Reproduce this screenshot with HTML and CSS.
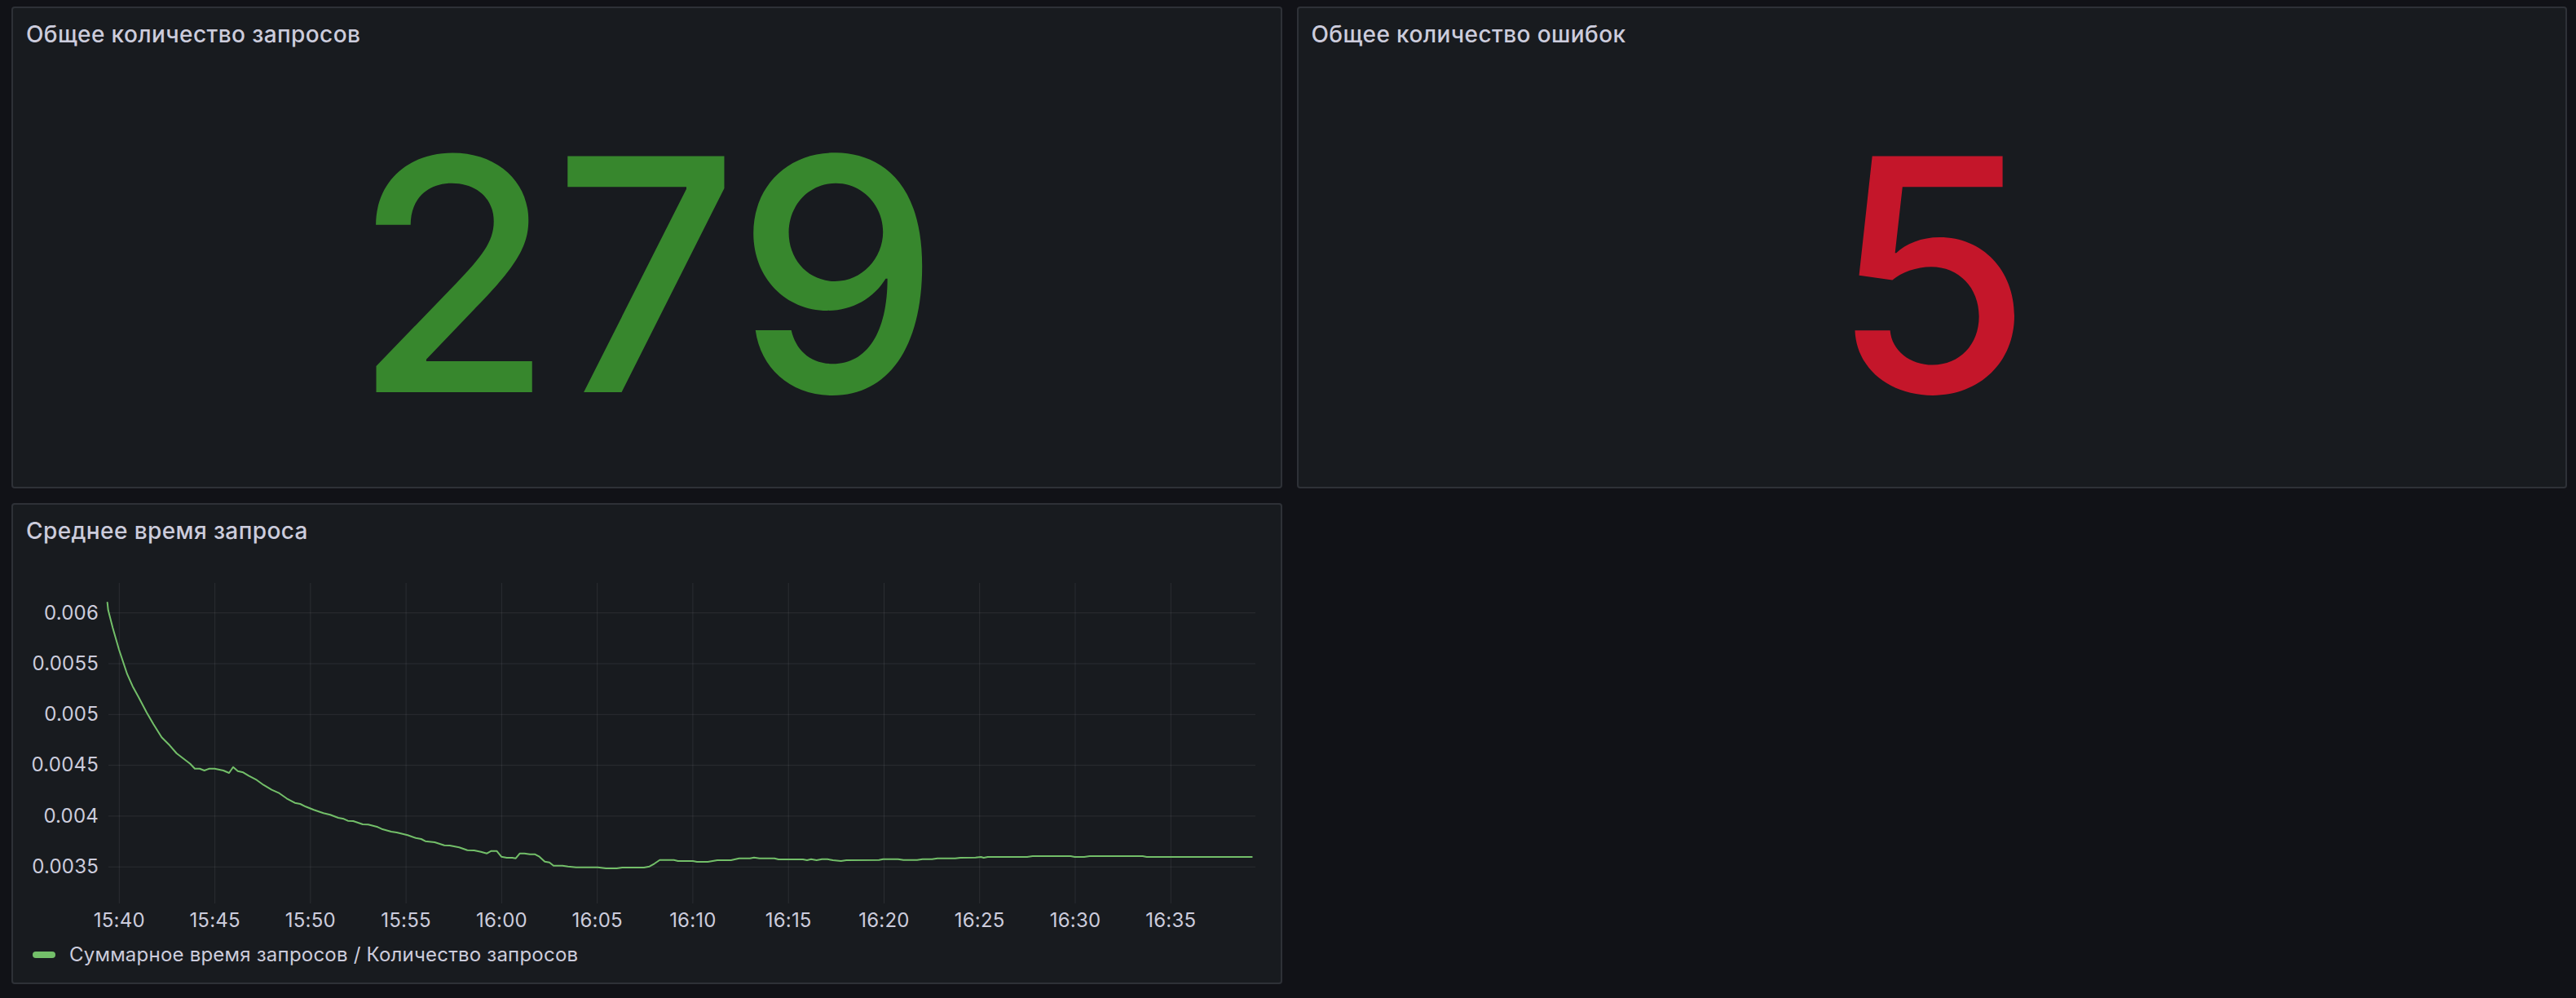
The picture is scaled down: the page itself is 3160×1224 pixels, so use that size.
FILE: index.html
```html
<!DOCTYPE html>
<html lang="ru">
<head>
<meta charset="utf-8">
<title>Dashboard</title>
<link rel="stylesheet" href="styles.css">
</head>
<body>
<div class="dashboard">
  <section class="panel">
    <header class="panel-header"><h2 class="panel-title">Общее количество запросов</h2></header>
    <div class="stat-body"><span class="stat-value stat-green">279</span></div>
  </section>
  <section class="panel">
    <header class="panel-header"><h2 class="panel-title">Общее количество ошибок</h2></header>
    <div class="stat-body"><span class="stat-value stat-red">5</span></div>
  </section>
  <section class="panel">
    <header class="panel-header"><h2 class="panel-title">Среднее время запроса</h2></header>
    <div class="chart-body">
      <svg class="chart" width="1555" height="468" viewBox="16 683 1555 468">
        <g class="grid">
          <line x1="133" y1="751.7" x2="1540" y2="751.7"/>
          <line x1="133" y1="814" x2="1540" y2="814"/>
          <line x1="133" y1="876.3" x2="1540" y2="876.3"/>
          <line x1="133" y1="938.6" x2="1540" y2="938.6"/>
          <line x1="133" y1="1000.9" x2="1540" y2="1000.9"/>
          <line x1="133" y1="1063.2" x2="1540" y2="1063.2"/>
          <line x1="146.3" y1="715" x2="146.3" y2="1108"/>
          <line x1="263.6" y1="715" x2="263.6" y2="1108"/>
          <line x1="380.8" y1="715" x2="380.8" y2="1108"/>
          <line x1="498.1" y1="715" x2="498.1" y2="1108"/>
          <line x1="615.4" y1="715" x2="615.4" y2="1108"/>
          <line x1="732.7" y1="715" x2="732.7" y2="1108"/>
          <line x1="849.9" y1="715" x2="849.9" y2="1108"/>
          <line x1="967.2" y1="715" x2="967.2" y2="1108"/>
          <line x1="1084.5" y1="715" x2="1084.5" y2="1108"/>
          <line x1="1201.7" y1="715" x2="1201.7" y2="1108"/>
          <line x1="1319" y1="715" x2="1319" y2="1108"/>
          <line x1="1436.3" y1="715" x2="1436.3" y2="1108"/>
        </g>
        <g class="axis-y">
          <text x="121" y="759.5">0.006</text>
          <text x="121" y="821.8">0.0055</text>
          <text x="121" y="884.1">0.005</text>
          <text x="121" y="946.4">0.0045</text>
          <text x="121" y="1008.7">0.004</text>
          <text x="121" y="1071">0.0035</text>
        </g>
        <g class="axis-x">
          <text x="146.3" y="1137">15:40</text>
          <text x="263.6" y="1137">15:45</text>
          <text x="380.8" y="1137">15:50</text>
          <text x="498.1" y="1137">15:55</text>
          <text x="615.4" y="1137">16:00</text>
          <text x="732.7" y="1137">16:05</text>
          <text x="849.9" y="1137">16:10</text>
          <text x="967.2" y="1137">16:15</text>
          <text x="1084.5" y="1137">16:20</text>
          <text x="1201.7" y="1137">16:25</text>
          <text x="1319" y="1137">16:30</text>
          <text x="1436.3" y="1137">16:35</text>
        </g>
        <polyline class="series" points="131.7,739 132.7,748.3 138.3,770 146,796.7 156,826.7 162.7,841.7 170,855 180,874 188.3,888.3 198.3,904.3 208.3,914.3 216.7,924 233.3,936.7 239,942.7 245,942.7 250.7,945 256.7,942.7 263.3,942.7 274,945 281,948 286,940.7 291.7,945.7 298.3,947.3 305,951.3 315,956.7 323.3,962.7 333.3,968.7 341.7,972.3 351.7,979.3 361.7,984.7 368.3,986 375,989.3 385,993.3 396.7,997.3 405,999.3 415,1003 421.7,1004.3 426.7,1006.7 433.3,1007 445,1011 451.7,1011.3 463.3,1014.3 468.3,1016.7 480,1020 486.7,1021 500,1024.3 510,1027.7 516.7,1029 521.7,1031.7 533.3,1033 545,1036.7 551.7,1037 563.3,1039.3 573.3,1042.7 581.7,1043 590,1044.7 597.3,1046.7 602.7,1043.7 609.3,1043.7 615,1050.7 621.7,1052 628.3,1052 632.7,1052.7 637.7,1046.7 643.3,1046.7 650,1047.7 656,1047.7 661.7,1050.7 668.3,1056.7 674,1057.7 679,1061.7 690,1061.7 696.7,1062.7 706.7,1063.7 733.3,1063.7 743.3,1065 756.7,1065 763.3,1064 790,1064 796.7,1062.7 802.7,1059.3 809.3,1054.7 826.7,1054.7 831.7,1056 850,1056 855,1057 868.3,1057 880,1055 896.7,1055 906.7,1052.7 920,1052.7 925,1051.7 931.7,1052.7 950,1052.7 955,1054 985,1054 990,1055 995,1053.7 1001.7,1055 1008.3,1053.7 1015,1053.7 1021.7,1055 1031.7,1056 1038.3,1055 1078.3,1054.7 1083.3,1053.7 1101.7,1053.7 1108.3,1054.7 1125,1054.7 1131.7,1053.7 1143.3,1053.7 1150,1052.7 1171.7,1052.7 1178.3,1052 1196.7,1051.7 1203.3,1051 1206.7,1052 1211.7,1051 1260,1051 1266.7,1050 1313.3,1050 1318.3,1051 1330,1051 1336.7,1050 1401.7,1050 1406.7,1051 1535.7,1051"/>
      </svg>
      <div class="legend">
        <span class="legend-swatch"></span>
        <span class="legend-label">Суммарное время запросов / Количество запросов</span>
      </div>
    </div>
  </section>
</div>
</body>
</html>
```

FILE: styles.css
```css
html, body {
  margin: 0;
  padding: 0;
  background: #111217;
}

body {
  width: 3160px;
  height: 1224px;
  overflow: hidden;
  font-family: Inter, "Noto Sans", "DejaVu Sans", sans-serif;
  color: #ccccdc;
}

.dashboard {
  display: grid;
  grid-template-columns: 1fr 1fr;
  grid-template-rows: 591px 590px;
  gap: 18px;
  padding: 8px 11px 0 14px;
}

.panel {
  background: #181b1f;
  border: 2px solid rgba(204, 204, 220, 0.13);
  border-radius: 4px;
  display: flex;
  flex-direction: column;
  min-width: 0;
  overflow: hidden;
}

.panel-header {
  height: 64px;
  flex: 0 0 64px;
  display: flex;
  align-items: center;
  padding: 0 16px;
}

.panel-title {
  margin: 0;
  font-size: 28px;
  line-height: 1;
  font-weight: 500;
  letter-spacing: 0.4px;
  color: #ccccdc;
  white-space: nowrap;
}

.stat-body {
  flex: 1;
  display: flex;
  align-items: center;
  justify-content: center;
}

.stat-value {
  font-size: 398px;
  line-height: 1;
  font-weight: 500;
}

.stat-green { color: #37872d; }
.stat-red { color: #c4162a; }

.chart-body {
  flex: 1;
  display: flex;
  flex-direction: column;
}

.chart {
  display: block;
  flex: 0 0 468px;
}

.grid line {
  stroke: rgba(204, 204, 220, 0.1);
  stroke-width: 1;
}

.axis-y text,
.axis-x text {
  font-family: Inter, "Noto Sans", sans-serif;
  font-size: 24px;
  letter-spacing: 0.2px;
  fill: #ccccdc;
}

.axis-y text { text-anchor: end; }
.axis-x text { text-anchor: middle; }

.series {
  fill: none;
  stroke: #73bf69;
  stroke-width: 2;
  stroke-linejoin: round;
  stroke-linecap: round;
}

.legend {
  height: 40px;
  display: flex;
  align-items: center;
  gap: 17px;
  padding-left: 24px;
}

.legend-swatch {
  width: 28px;
  height: 8px;
  border-radius: 4px;
  background: #73bf69;
}

.legend-label {
  font-size: 24px;
  line-height: 1;
  letter-spacing: 0.22px;
  color: #ccccdc;
}
```
